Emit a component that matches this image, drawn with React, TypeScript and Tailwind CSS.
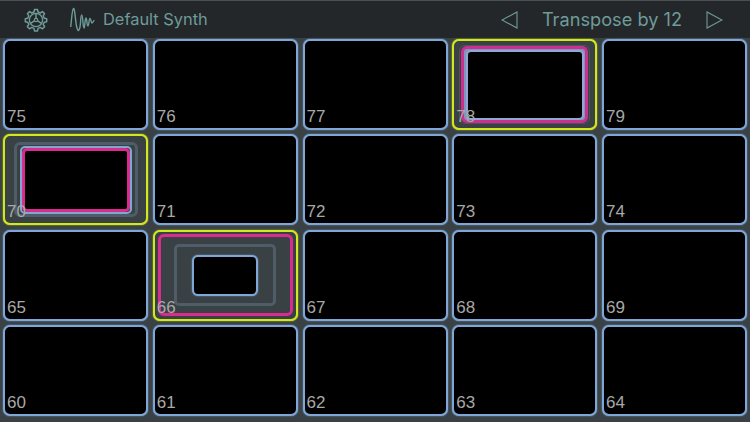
const glow = "shadow-[0_0_1.5px_#7ea6d6]";

export default function App() {
  return <div className="w-[750px] h-[422px] overflow-hidden bg-[#3a4144] font-['Inter','Liberation_Sans',sans-serif]">
    <Header />
    <div className="grid grid-cols-5 gap-x-[4.75px] gap-y-[4.33px] px-[3px] pt-[1px]">
      {[75,76,77,78,79,70,71,72,73,74,65,66,67,68,69,60,61,62,63,64].map((n) => <Cell key={n} n={n} />)}
    </div>
  </div>;
}

function Header() {
  return <div className="h-[38px] bg-[#23272a] border-t border-[#4a4f52] flex items-center text-[#6f9b99]">
    <svg className="ml-[24px] w-[24px] h-[24px]" viewBox="0 0 24 24" fill="none" stroke="#6f9b99">
      <path strokeWidth="1.5" strokeLinejoin="round" d="M10.5 1.5h3l.5 2.5 2.3 1 2.2-1.4 2.1 2.1-1.4 2.2 1 2.3 2.5.5v3l-2.5.5-1 2.3 1.4 2.2-2.1 2.1-2.2-1.4-2.3 1-.5 2.5h-3l-.5-2.5-2.3-1-2.2 1.4-2.1-2.1 1.4-2.2-1-2.3-2.5-.5v-3l2.5-.5 1-2.3-1.4-2.2 2.1-2.1 2.2 1.4 2.3-1z" />
      <circle cx="12" cy="12" r="6.6" strokeWidth="1.3" />
      <circle cx="12" cy="12" r="1.7" strokeWidth="1.2" />
      <path strokeWidth="1.5" d="M12 10.2V5.6M10.4 12.9l-3.9 2.4M13.6 12.9l3.9 2.4" />
    </svg>
    <svg className="ml-[22px] w-[25px] h-[26px]" viewBox="0 0 25 26" fill="none" stroke="#6f9b99" strokeWidth="1.4" strokeLinejoin="round">
      <path d="M0.7 20C1.5 14 2 2 3.5 1.5 5 1 5.5 17 7 21 8 24.5 9 24.5 10 20 10.8 16 10.5 8 11.7 8 13 8 12.8 21 14 21 15 21 14.8 11 16 11 17 11 16.8 19 18 19 19 19 18.8 11.5 20 11.5 21 11.5 21 16 22 16 23 16 23 13.5 24.5 13.5" />
    </svg>
    <span className="ml-[8px] text-[16.4px] leading-none whitespace-nowrap">Default Synth</span>
    <svg className="ml-auto w-[17px] h-[18px]" viewBox="0 0 17 18" fill="none" stroke="#6f9b99" strokeWidth="1.1"><path d="M16 1v16L1 9z" /></svg>
    <span className="ml-[24px] text-[18.2px] leading-none whitespace-nowrap">Transpose by 12</span>
    <svg className="ml-[24px] mr-[27px] w-[17px] h-[18px]" viewBox="0 0 17 18" fill="none" stroke="#6f9b99" strokeWidth="1.1"><path d="M1 1v16l15-8z" /></svg>
  </div>;
}

function Label({ n }: { n: number }) {
  return <span className="absolute left-[2px] bottom-[2px] text-[17px] leading-[18px] text-[#a8a8a8] z-10 font-['Liberation_Sans',sans-serif]">{n}</span>;
}

const selected = "relative h-[91px] rounded-[7px] border-2 border-[#d2e81e] shadow-[0_0_1.5px_#d2e81e] bg-[#3a4144] flex items-center justify-center";

function Cell({ n }: { n: number }) {
  if (n === 78) return <div className={selected}>
    <div className="w-[131px] h-[79px] rounded-[6px] border border-[#4b545a] flex items-center justify-center">
      <div className="w-[127px] h-[77px] rounded-[6px] border-[3px] border-[#cc2f8e] bg-[#7f95c0] flex items-center justify-center">
        <div className="w-[118px] h-[70px] rounded-[5px] border-2 border-[#8fa7d4] bg-black" />
      </div>
    </div>
    <Label n={n} />
  </div>;
  if (n === 70) return <div className={selected}>
    <div className="w-[124px] h-[75px] rounded-[6px] border-[3px] border-[#4e5d68] flex items-center justify-center">
      <div className="w-[112px] h-[68px] rounded-[5px] border-2 border-[#83a6d0] flex items-center justify-center">
        <div className="w-[108px] h-[64px] rounded-[5px] border-[3px] border-[#d92c8f] bg-black" />
      </div>
    </div>
    <Label n={n} />
  </div>;
  if (n === 66) return <div className={selected}>
    <div className="w-[135px] h-[82px] rounded-[6px] border-[3px] border-[#d92c8f] flex items-center justify-center">
      <div className="w-[102px] h-[62px] rounded-[5px] border-[3px] border-[#4e5d68] flex items-center justify-center">
        <div className={"w-[66px] h-[41px] rounded-[6px] border-2 border-[#7ea6d6] bg-black " + glow} />
      </div>
    </div>
    <Label n={n} />
  </div>;
  return <div className={"relative h-[91px] rounded-[7px] border-2 border-[#7ea6d6] bg-black " + glow}><Label n={n} /></div>;
}
